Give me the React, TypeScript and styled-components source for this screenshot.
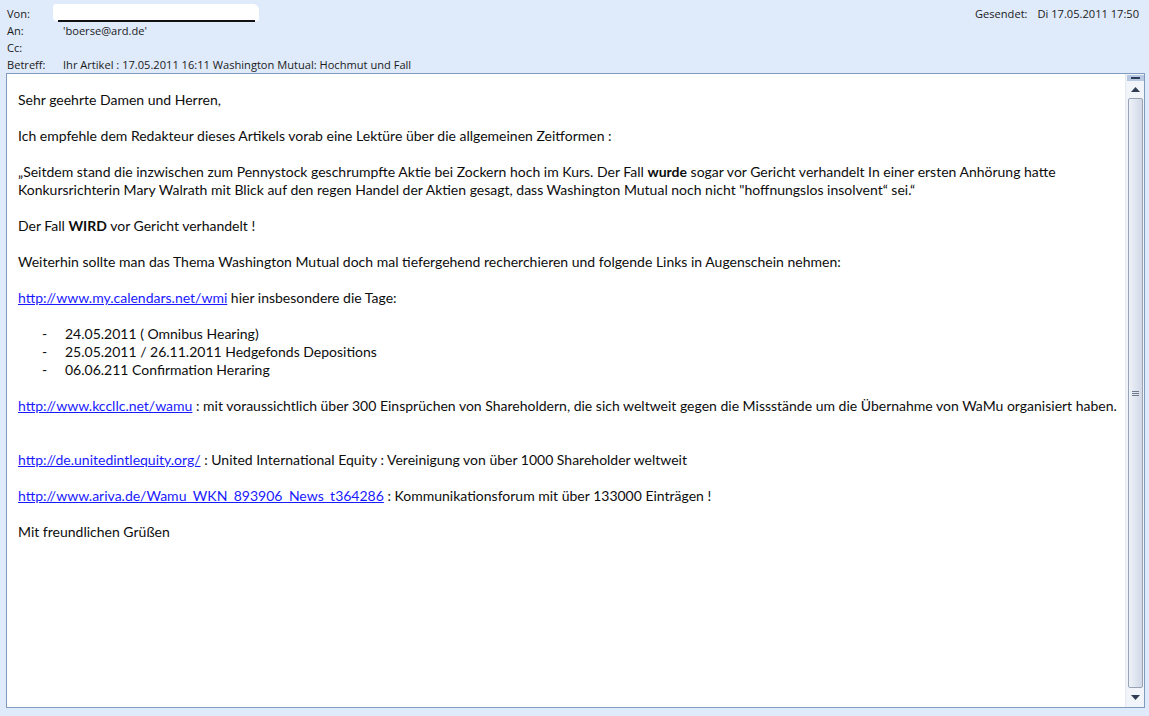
import styled, { createGlobalStyle } from "styled-components";

const GlobalStyle = createGlobalStyle`
  html, body {
    margin: 0;
    padding: 0;
    background: #dfeafb;
  }
`;

const Page = styled.div`
  width: 1149px;
  height: 716px;
  box-sizing: border-box;
  padding: 5px 4px 8px 6px;
  background: #dfeafb;
  display: flex;
  flex-direction: column;
  overflow: hidden;
`;

const Header = styled.div`
  display: flex;
  justify-content: space-between;
  font-family: "Open Sans", "Liberation Sans", sans-serif;
  font-size: 11.1px;
  color: #1a1a1a;
  height: 68px;
`;

const Fields = styled.div`
  display: grid;
  grid-template-columns: 56px auto;
  grid-auto-rows: 17px;
  align-items: center;
  padding-left: 1px;
`;

const Label = styled.span``;

const Value = styled.span`
  white-space: nowrap;
`;

const Redacted = styled.span`
  position: relative;
  display: inline-block;
  width: 206px;
  height: 17px;
  margin-left: -10px;
  background: #ffffff;
  border-radius: 3px 6px 2px 4px;

  &::after {
    content: "";
    position: absolute;
    left: 5px;
    right: 4px;
    bottom: -1px;
    height: 2px;
    background: #111;
  }
`;

const Sent = styled.div`
  display: flex;
  gap: 10px;
  height: 17px;
  align-items: center;
  padding-right: 6px;
`;

const MessageBox = styled.div`
  flex: 1;
  display: flex;
  background: #ffffff;
  border: 1px solid #7f9cbf;
  min-height: 0;
`;

const Content = styled.div`
  flex: 1;
  padding: 17px 11px 9px;
  font-family: Lato, "Open Sans", sans-serif;
  font-size: 14px;
  line-height: 18px;
  color: #0d0d0d;
  overflow: hidden;
`;

const Para = styled.p<{ $gap?: number }>`
  margin: 0 0 ${(p) => p.$gap ?? 18}px 0;
  white-space: nowrap;
`;

const Link = styled.a`
  color: #1a1aff;
  text-decoration: underline;
`;

const List = styled.ul`
  list-style: none;
  margin: 0 0 18px 0;
  padding: 0 0 0 24px;
`;

const Item = styled.li`
  display: flex;
  white-space: nowrap;

  &::before {
    content: "-";
    width: 23px;
  }
`;

const Scrollbar = styled.div`
  width: 18px;
  display: flex;
  flex-direction: column;
  align-items: center;
  background: #f1f4f9;
  border-left: 1px solid #e4e9f1;
  padding-bottom: 2px;
`;

const SplitBox = styled.div`
  width: 17px;
  height: 6px;
  margin-top: 1px;
  background: #b6c8e2;
  display: flex;
  align-items: center;
  justify-content: center;

  &::after {
    content: "";
    width: 9px;
    height: 2px;
    background: #2d3d55;
  }
`;

const ArrowButton = styled.div`
  height: 16px;
  width: 17px;
  display: flex;
  align-items: center;
  justify-content: center;
`;

const Thumb = styled.div`
  flex: 1;
  width: 13px;
  margin: 1px 0;
  border: 1px solid #98a4b6;
  border-radius: 2px;
  background: linear-gradient(to right, #eef2f8, #dce3ee 60%, #d1d9e6);
  display: flex;
  align-items: center;
  justify-content: center;
`;

const Grip = styled.div`
  width: 7px;
  height: 6px;
  background: repeating-linear-gradient(
    to bottom,
    #6d7a8e 0,
    #6d7a8e 1px,
    transparent 1px,
    transparent 2px
  );
  margin-top: 2px;
`;

const Arrow = ({ down }: { down?: boolean }) => (
  <svg width="9" height="5" viewBox="0 0 9 5">
    <path d={down ? "M0 0 L9 0 L4.5 5 Z" : "M0 5 L9 5 L4.5 0 Z"} fill="#2f3d52" />
  </svg>
);

export default function App() {
  return (
    <>
      <GlobalStyle />
      <Page>
        <Header>
          <Fields>
            <Label>Von:</Label>
            <Value>
              <Redacted />
            </Value>
            <Label>An:</Label>
            <Value>'boerse@ard.de'</Value>
            <Label>Cc:</Label>
            <Value></Value>
            <Label>Betreff:</Label>
            <Value>Ihr Artikel : 17.05.2011 16:11 Washington Mutual: Hochmut und Fall</Value>
          </Fields>
          <Sent>
            <Label>Gesendet:</Label>
            <Value>Di 17.05.2011 17:50</Value>
          </Sent>
        </Header>
        <MessageBox>
          <Content>
            <Para>Sehr geehrte Damen und Herren,</Para>
            <Para>
              Ich empfehle dem Redakteur dieses Artikels vorab eine Lektüre über die allgemeinen
              Zeitformen :
            </Para>
            <Para>
              „Seitdem stand die inzwischen zum Pennystock geschrumpfte Aktie bei Zockern hoch im
              Kurs. Der Fall <b>wurde</b> sogar vor Gericht verhandelt In einer ersten Anhörung hatte
              <br />
              Konkursrichterin Mary Walrath mit Blick auf den regen Handel der Aktien gesagt, dass
              Washington Mutual noch nicht "hoffnungslos insolvent“ sei.“
            </Para>
            <Para>
              Der Fall <b>WIRD</b> vor Gericht verhandelt !
            </Para>
            <Para>
              Weiterhin sollte man das Thema Washington Mutual doch mal tiefergehend recherchieren
              und folgende Links in Augenschein nehmen:
            </Para>
            <Para>
              <Link href="#">http://www.my.calendars.net/wmi</Link> hier insbesondere die Tage:
            </Para>
            <List>
              <Item>24.05.2011 ( Omnibus Hearing)</Item>
              <Item>25.05.2011 / 26.11.2011 Hedgefonds Depositions</Item>
              <Item>06.06.211 Confirmation Heraring</Item>
            </List>
            <Para $gap={36}>
              <Link href="#">http://www.kccllc.net/wamu</Link> : mit voraussichtlich über 300
              Einsprüchen von Shareholdern, die sich weltweit gegen die Missstände um die Übernahme
              von WaMu organisiert haben.
            </Para>
            <Para>
              <Link href="#">http://de.unitedintlequity.org/</Link> : United International Equity :
              Vereinigung von über 1000 Shareholder weltweit
            </Para>
            <Para>
              <Link href="#">http://www.ariva.de/Wamu_WKN_893906_News_t364286</Link> :
              Kommunikationsforum mit über 133000 Einträgen !
            </Para>
            <Para>Mit freundlichen Grüßen</Para>
          </Content>
          <Scrollbar>
            <SplitBox />
            <ArrowButton>
              <Arrow />
            </ArrowButton>
            <Thumb>
              <Grip />
            </Thumb>
            <ArrowButton>
              <Arrow down />
            </ArrowButton>
          </Scrollbar>
        </MessageBox>
      </Page>
    </>
  );
}
